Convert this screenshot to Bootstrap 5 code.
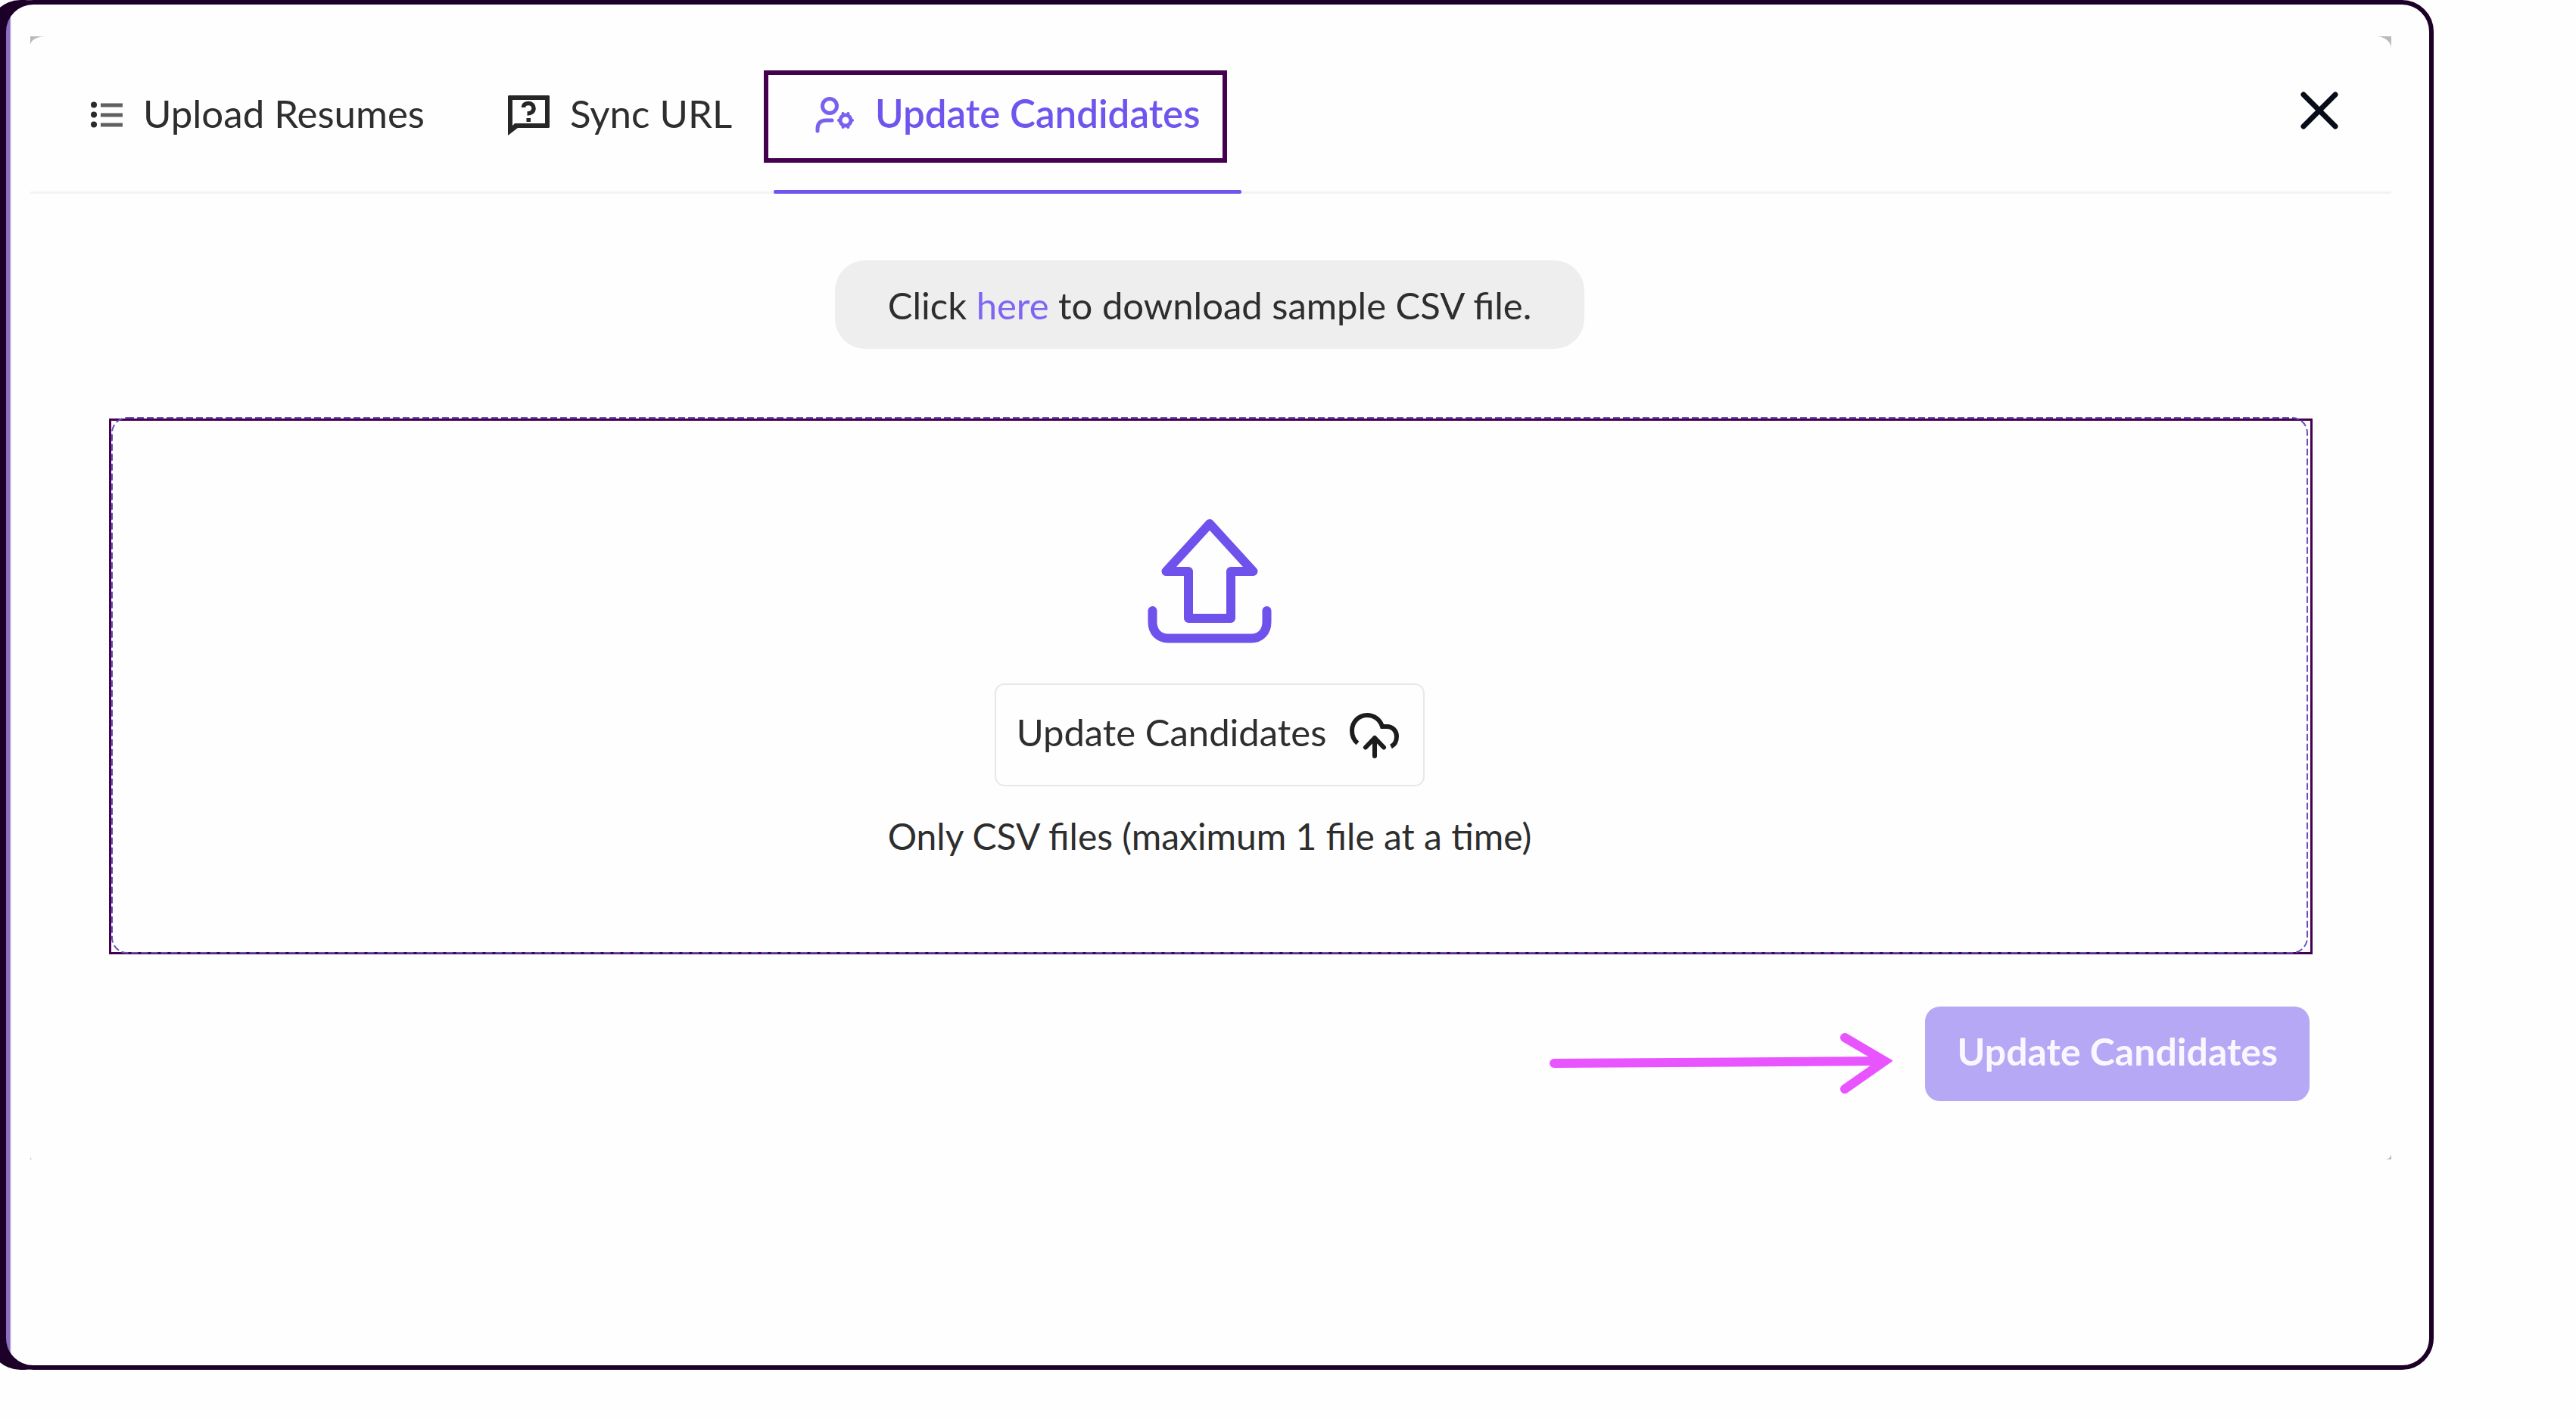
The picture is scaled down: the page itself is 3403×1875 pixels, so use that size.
<!DOCTYPE html>
<html lang="en">
<head>
<meta charset="utf-8">
<meta name="viewport" content="width=device-width, initial-scale=1">
<title>Update Candidates</title>
<link href="https://cdn.jsdelivr.net/npm/bootstrap@5.3.0/dist/css/bootstrap.min.css" rel="stylesheet">
<style>
  :root {
    --brand: #6f55ee;
    --ink: #2e2e2e;
    --night: #1d0028;
    --plum: #45004f;
  }
  body {
    font-family: Lato, "Open Sans", sans-serif;
    font-size: 51px;
    line-height: 60px;
    color: var(--ink);
    background: #fefefe;
    overflow-x: hidden;
  }
  svg { display: block; flex: none; }
  button { color: inherit; }

  /* Outer frame with a dark slab peeking out on its left */
  .stage {
    margin: 0 188px 65px 2px;
    min-height: calc(100vh - 65px);
    z-index: 0;
  }
  .stage::before {
    content: "";
    position: absolute;
    inset: 0 auto 0 -17px;
    width: 90px;
    border-radius: 42px;
    background: var(--night);
    z-index: -1;
  }
  .stage-frame {
    min-height: inherit;
    padding: 42px 50px 0 32px;
    border: 6px solid var(--night);
    border-radius: 42px;
    background: linear-gradient(to right, #8a6fc0 5px, #d3c9e8 6px, #fefefe 7px);
  }
  .backdrop { background: #b9b9b9; }
  .sheet {
    background: #fefefe;
    border-radius: 20px 20px 8px 4px / 12px 16px 8px 4px;
    padding-bottom: 77px;
  }

  /* Header tabs */
  .sheet-head {
    height: 208px;
    padding: 0 67px 0 25px;
    border-bottom: 3px solid #f3f3f3;
  }
  .tab-btn {
    gap: 27px;
    padding: 0 55px 2px;
    border: 0;
    background: none;
    white-space: nowrap;
  }
  .tab-btn svg { margin-top: 5px; }
  .tab-btn.active { color: var(--brand); font-weight: 600; }
  .tab-btn.active::after {
    content: "";
    position: absolute;
    inset: auto 0 -3px 0;
    height: 5px;
    border-radius: 2px;
    background: var(--brand);
  }
  .callout {
    position: absolute;
    inset: 45px 19px 38px -13px;
    border: 6px solid var(--plum);
  }
  .close-btn { border: 0; background: none; padding: 0 0 10px; }

  /* Sample file hint */
  .hint-row { padding-right: 3px; }
  .hint {
    margin-top: 88px;
    height: 117px;
    padding: 0 70px;
    border-radius: 40px;
    background: #eee;
    font-size: 49px;
  }
  .hint a { color: #7f66f2; }

  /* Drop zone */
  .dropzone {
    margin: 92px 104px 0;
    padding: 129px 3px 123px 0;
    border: 3px solid var(--plum);
  }
  .dash {
    position: absolute;
    top: -5px;
    left: 0;
    width: calc(100% - 3px);
    height: calc(100% + 7px);
    pointer-events: none;
  }
  .dash rect { width: calc(100% - 2px); height: calc(100% - 2px); }
  .pick-btn {
    gap: 31px;
    height: 136px;
    margin-top: 53px;
    padding: 0 32px 8px 27px;
    border: 2px solid #e8e8e8;
    border-radius: 13px;
    background: #fefefe;
    font-size: 49px;
  }
  .pick-btn svg { margin-top: 9px; }
  .note { margin-top: 36px; font-size: 48px; }

  /* Footer */
  .sheet-foot { gap: 43px; margin: 69px 108px 0; }
  .sheet-foot svg { margin-top: 26px; }
  .submit-btn {
    height: 125px;
    padding: 0 42px 7px;
    border: 0;
    border-radius: 20px;
    background: #b6a8f5;
    color: #f9f7ff;
    font-size: 50px;
    font-weight: 700;
  }
</style>
</head>
<body>
<div class="stage position-relative">
  <div class="stage-frame">
    <div class="backdrop">
      <main class="sheet">
        <header class="sheet-head d-flex align-items-stretch justify-content-between">
          <nav class="d-flex" aria-label="Import options">
            <button type="button" class="tab-btn d-flex align-items-center">
              <svg width="42" height="36" viewBox="0 0 42 36" aria-hidden="true">
                <g fill="#2b2b2b"><circle cx="4" cy="4.500" r="4"/><circle cx="4" cy="17.500" r="4"/><circle cx="4" cy="30.500" r="4"/></g>
                <path d="M13 5H42M13 18H42M13 31H42" stroke="#606060" stroke-width="5"/>
              </svg>
              <span>Upload Resumes</span>
            </button>
            <button type="button" class="tab-btn d-flex align-items-center">
              <svg width="55" height="53" viewBox="0 0 55 53" fill="none" aria-hidden="true">
                <path fill="#262626" fill-rule="evenodd" d="M1 0H54L55 1V42L54 43H13L0 53V1ZM6 6V40L9 37H49V6Z"/>
                <path d="M20.500 16C20.500 12 23.500 10.500 27 10.500C31 10.500 34 13 34 17C34 21.500 31 24 25.500 24" stroke="#262626" stroke-width="5.500"/>
                <path d="M24.500 30H30V35H24.500Z" fill="#262626"/>
              </svg>
              <span>Sync URL</span>
            </button>
            <button type="button" class="tab-btn active d-flex align-items-center position-relative" aria-current="page">
              <svg width="52" height="52" viewBox="0 0 52 52" fill="none" stroke="#7a60f0" stroke-width="5" stroke-linecap="round" aria-hidden="true">
                <circle cx="19" cy="14" r="9.500"/>
                <path d="M3 47V44C3 37 7 33 14 33H22"/>
                <circle cx="40" cy="33" r="7"/>
                <path stroke-width="4" d="M37 25.500L36.500 24M43 25.500L43.500 24M37 40.500L36.500 42M43 40.500L43.500 42M32 33H31M48 33H49"/>
              </svg>
              <span>Update Candidates</span>
              <span class="callout"></span>
            </button>
          </nav>
          <button type="button" class="close-btn" aria-label="Close">
            <svg width="56" height="56" viewBox="0 0 56 56" aria-hidden="true"><path d="M7 7L49 49M49 7L7 49" stroke="#060c18" stroke-width="7" stroke-linecap="round"/></svg>
          </button>
        </header>

        <div class="hint-row d-flex justify-content-center">
          <p class="hint d-flex align-items-center mb-0"><span>Click <a href="#sample" class="text-decoration-none">here</a> to download sample CSV file.</span></p>
        </div>

        <section class="dropzone position-relative d-flex flex-column align-items-center">
          <svg class="dash" aria-hidden="true"><rect x="1" y="1" rx="20" ry="20" fill="none" stroke="#6453bd" stroke-width="2" stroke-dasharray="9 4"/></svg>
          <svg width="164" height="165" viewBox="0 0 164 165" fill="none" stroke="#6f52ec" stroke-width="12" stroke-linecap="round" stroke-linejoin="round" aria-hidden="true">
            <path d="M82 7L24.500 70H54V132H110V70H139.500Z"/>
            <path d="M6.500 122V137C6.500 150 15 158.500 27 158.500H137C149 158.500 157.500 150 157.500 137V122"/>
          </svg>
          <button type="button" class="pick-btn d-flex align-items-center">
            <span>Update Candidates</span>
            <svg width="65" height="60" viewBox="0 0 65 60" fill="none" stroke="#1c1c1c" stroke-width="6" aria-hidden="true">
              <path d="M10.500 40C5.500 36 3 30 3 23.500C3 12 12 3 23 3C32 3 40 8.500 43 18H49C57 18 62 24 62 31C62 37 59.500 42 54.500 44.500"/>
              <path d="M33 57V33M21 45.500L33 33L45 45.500" stroke-linecap="round" stroke-linejoin="round"/>
            </svg>
          </button>
          <p class="note mb-0">Only CSV files (maximum 1 file at a time)</p>
        </section>

        <footer class="sheet-foot d-flex justify-content-end align-items-center">
          <svg width="453" height="82" viewBox="0 0 453 82" fill="none" stroke="#e855ff" stroke-width="12" stroke-linecap="round" aria-hidden="true">
            <path d="M6 40L440 37"/>
            <path d="M390 6L443 37L390 74" stroke-linejoin="miter"/>
          </svg>
          <button type="button" class="submit-btn">Update Candidates</button>
        </footer>
      </main>
    </div>
  </div>
</div>
<script src="https://cdn.jsdelivr.net/npm/bootstrap@5.3.0/dist/js/bootstrap.bundle.min.js"></script>
</body>
</html>
